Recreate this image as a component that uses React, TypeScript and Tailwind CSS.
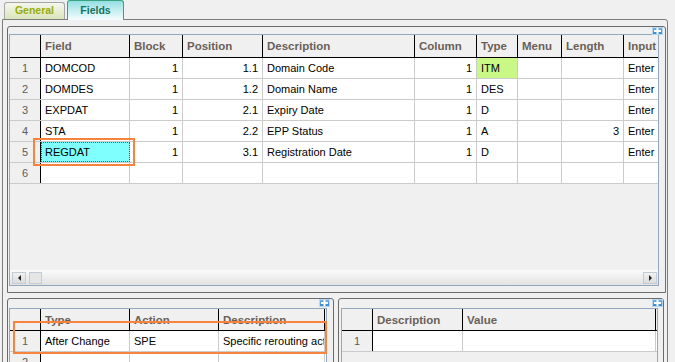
import React from "react";

type Col = { label: string; w: string; right?: boolean };

const FIELD_COLS: Col[] = [
  { label: "Field", w: "w-[89px]" },
  { label: "Block", w: "w-[53px]", right: true },
  { label: "Position", w: "w-[80px]", right: true },
  { label: "Description", w: "w-[152px]" },
  { label: "Column", w: "w-[62px]", right: true },
  { label: "Type", w: "w-[41px]" },
  { label: "Menu", w: "w-[44px]" },
  { label: "Length", w: "w-[62px]", right: true },
  { label: "Input", w: "w-[60px]" },
];

const FIELD_ROWS: string[][] = [
  ["DOMCOD", "1", "1.1", "Domain Code", "1", "ITM", "", "", "Enter"],
  ["DOMDES", "1", "1.2", "Domain Name", "1", "DES", "", "", "Enter"],
  ["EXPDAT", "1", "2.1", "Expiry Date", "1", "D", "", "", "Enter"],
  ["STA", "1", "2.2", "EPP Status", "1", "A", "", "3", "Enter"],
  ["REGDAT", "1", "3.1", "Registration Date", "1", "D", "", "", "Enter"],
  ["", "", "", "", "", "", "", "", ""],
];

const EVENT_COLS: Col[] = [
  { label: "Type", w: "w-[89px]" },
  { label: "Action", w: "w-[89px]" },
  { label: "Description", w: "w-[106px]" },
];

const EVENT_ROWS: string[][] = [
  ["After Change", "SPE", "Specific rerouting action"],
  ["", "", ""],
];

const PARAM_COLS: Col[] = [
  { label: "Description", w: "w-[90px]" },
  { label: "Value", w: "w-[193px]" },
];

function PlusBtn({ className }: { className: string }) {
  return (
    <div
      className={`absolute flex h-[8px] w-[11px] items-center justify-end border border-[#b9d7ee] bg-linear-to-b from-[#6fb2e6] to-[#3a86c8] pr-[1px] ${className}`}
    >
      <svg width="7" height="6" viewBox="0 0 7 6">
        <path d="M2.5 0h2v2H7v2H4.5v2h-2V4H0V2h2.5z" fill="#fff" />
      </svg>
    </div>
  );
}

function HeaderRow({ cols, h }: { cols: Col[]; h: string }) {
  return (
    <div className={`flex ${h} shrink-0 border-b border-black bg-[#f0f0f0]`}>
      <div className="w-[31px] shrink-0 border-r border-black" />
      {cols.map((c) => (
        <div
          key={c.label}
          className={`${c.w} shrink-0 overflow-hidden whitespace-nowrap border-r border-black pl-[4px] pt-[4px] text-[11.5px] font-bold leading-[14px] text-[#6a5f58]`}
        >
          {c.label}
        </div>
      ))}
    </div>
  );
}

function DataRow({ n, cols, cells }: { n: number; cols: Col[]; cells: string[] }) {
  return (
    <div className="flex h-[21px] shrink-0 border-b border-[#cbcbcb] bg-white">
      <div className="w-[31px] shrink-0 border-r border-black bg-[#f0f0f0] text-center leading-[20px] text-[#5c5c5c]">
        {n}
      </div>
      {cols.map((c, i) => {
        const v = cells[i];
        const itm = v === "ITM";
        const sel = v === "REGDAT";
        return (
          <div
            key={c.label}
            className={`${c.w} shrink-0 overflow-hidden whitespace-nowrap border-r border-[#cbcbcb] leading-[20px] ${
              c.right ? "pr-[4px] text-right" : "pl-[4px]"
            } ${itm ? "bg-[#c9f887]" : ""} ${
              sel ? "bg-[#80ffff] outline-1 -outline-offset-1 outline-dotted outline-[#a83a3a]" : ""
            }`}
          >
            {v}
          </div>
        );
      })}
    </div>
  );
}

function ScrollBtn({ dir }: { dir: "left" | "right" }) {
  return (
    <div className="flex h-[12px] w-[14px] shrink-0 items-center justify-center border border-[#c3ccd6] bg-linear-to-b from-[#f2f2f2] to-[#dcdcdc]">
      {dir === "left" ? (
        <div className="h-0 w-0 border-y-[3px] border-r-[3px] border-y-transparent border-r-[#222]" />
      ) : (
        <div className="h-0 w-0 border-y-[3px] border-l-[3px] border-y-transparent border-l-[#222]" />
      )}
    </div>
  );
}

export default function App() {
  return (
    <div className="relative h-[362px] w-[675px] overflow-hidden bg-[#f0f0f0] font-['Liberation_Sans',Arial,sans-serif] text-[11px] text-black">
      {/* Tabs */}
      <div className="flex h-[19px] items-end pl-[4px]">
        <div className="flex h-[17px] w-[61px] items-center justify-center rounded-t-[3px] border border-b-0 border-[#a6a6a6] bg-linear-to-b from-[#f4f6ee] to-[#dae5bb] text-[10.5px] font-bold text-[#98ac00]">
          General
        </div>
        <div className="relative z-10 -mb-px ml-[2px] flex h-[20px] w-[57px] items-center justify-center rounded-t-[3px] border border-b-0 border-[#38a47b] bg-linear-to-b from-[#93dfe3] to-[#f4fdfd] text-[10.5px] font-bold text-[#137360]">
          Fields
        </div>
      </div>

      {/* Tab page */}
      <div className="ml-[2px] h-[380px] w-[666px] rounded-tr-[3px] border border-[#7d7d7d] pl-[4px] pt-[6px]">
        {/* Fields grid */}
        <div className="relative h-[267px] w-[659px] rounded-t-[3px] border border-[#6b6b6b] pl-[1px] pt-[7px]">
          <PlusBtn className="right-[2px] top-0" />
          <div className="flex h-[252px] w-[650px] flex-col overflow-hidden border border-[#93a8bc]">
            <HeaderRow cols={FIELD_COLS} h="h-[23px]" />
            {FIELD_ROWS.map((r, i) => (
              <DataRow key={i} n={i + 1} cols={FIELD_COLS} cells={r} />
            ))}
            <div className="flex-1" />
            <div className="flex h-[15px] shrink-0 items-center gap-[3px] bg-linear-to-b from-[#fbfbfb] to-[#e2e2e2] pl-[2px] pr-[1px]">
              <ScrollBtn dir="left" />
              <div className="h-[12px] w-[13px] shrink-0 border border-[#c3ccd6] bg-[#e6e6e6]" />
              <div className="flex-1" />
              <ScrollBtn dir="right" />
            </div>
          </div>
        </div>

        {/* Events / parameters */}
        <div className="mt-[5px] flex gap-[4px]">
          <div className="relative h-[80px] w-[327px] rounded-t-[3px] border border-[#6b6b6b] pl-[1px] pt-[9px]">
            <PlusBtn className="right-[3px] top-0" />
            <div className="flex h-[70px] w-[318px] flex-col overflow-hidden border border-[#93a8bc]">
              <HeaderRow cols={EVENT_COLS} h="h-[22px]" />
              {EVENT_ROWS.map((r, i) => (
                <DataRow key={i} n={i + 1} cols={EVENT_COLS} cells={r} />
              ))}
            </div>
          </div>
          <div className="relative h-[80px] w-[326px] rounded-t-[3px] border border-[#6b6b6b] pl-[2px] pt-[9px]">
            <PlusBtn className="right-0 top-0" />
            <div className="flex h-[70px] w-[317px] flex-col overflow-hidden border border-[#93a8bc]">
              <HeaderRow cols={PARAM_COLS} h="h-[22px]" />
              <DataRow n={1} cols={PARAM_COLS} cells={["", ""]} />
            </div>
          </div>
        </div>
      </div>

      {/* Annotation highlights */}
      <div className="pointer-events-none absolute left-[33px] top-[138px] h-[28px] w-[102px] border-2 border-[#f6843e]" />
      <div className="pointer-events-none absolute left-[13px] top-[321px] h-[33px] w-[314px] border-2 border-[#f6843e]" />
    </div>
  );
}
